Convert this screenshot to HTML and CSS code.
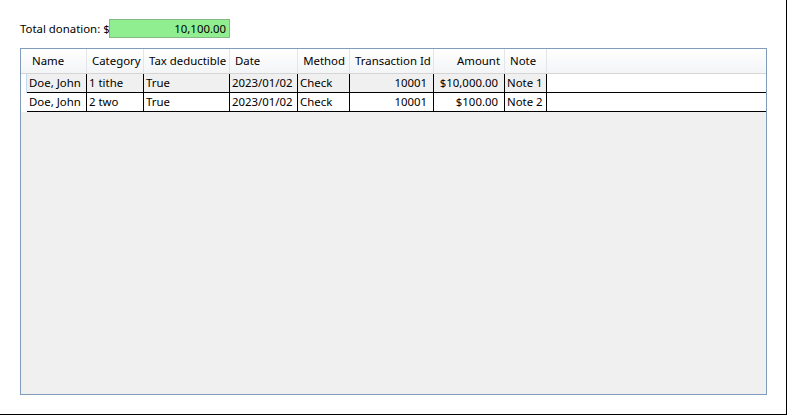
FILE: index.html
```html
<!DOCTYPE html>
<html>
<head>
<meta charset="utf-8">
<link rel="stylesheet" href="styles.css">
</head>
<body>
<div class="window">
  <div class="total">
    <span class="total-label">Total donation: $</span>
    <div class="total-box">10,100.00</div>
  </div>
  <div class="datagrid">
    <div class="dg-row dg-head">
      <div class="hc rh"></div>
      <div class="hc">Name</div>
      <div class="hc">Category</div>
      <div class="hc">Tax deductible</div>
      <div class="hc">Date</div>
      <div class="hc right">Method</div>
      <div class="hc">Transaction Id</div>
      <div class="hc right">Amount</div>
      <div class="hc">Note</div>
      <div class="hc filler"></div>
    </div>
    <div class="dg-row selected">
      <div class="rh-cell active"></div>
      <div class="c">Doe, John</div>
      <div class="c">1 tithe</div>
      <div class="c">True</div>
      <div class="c">2023/01/02</div>
      <div class="c">Check</div>
      <div class="c right">10001</div>
      <div class="c right">$10,000.00</div>
      <div class="c">Note 1</div>
      <div class="c filler"></div>
    </div>
    <div class="dg-row">
      <div class="rh-cell"></div>
      <div class="c">Doe, John</div>
      <div class="c">2 two</div>
      <div class="c">True</div>
      <div class="c">2023/01/02</div>
      <div class="c">Check</div>
      <div class="c right">10001</div>
      <div class="c right">$100.00</div>
      <div class="c">Note 2</div>
      <div class="c filler"></div>
    </div>
  </div>
</div>
</body>
</html>
```

FILE: styles.css
```css
html, body {
  margin: 0;
  padding: 0;
  background: #ffffff;
}
body {
  font-family: "Noto Sans", "Open Sans", sans-serif;
  font-size: 11.4px;
  color: #000;
}
.window {
  width: 787px;
  height: 415px;
  box-sizing: border-box;
  border-right: 1px solid #000;
  border-bottom: 1px solid #000;
  padding: 19px 0 0 20px;
}
.total {
  display: flex;
  align-items: center;
  height: 19px;
}
.total-label {
  width: 89px;
  white-space: nowrap;
}
.total-box {
  box-sizing: border-box;
  width: 121px;
  height: 19px;
  background: #90ee90;
  border: 1px solid #86b886;
  text-align: right;
  padding-right: 3px;
  line-height: 17px;
}
.datagrid {
  margin-top: 10px;
  box-sizing: border-box;
  width: 747px;
  height: 347px;
  border: 1px solid #7f9cbb;
  background: #f0f0f0;
}
.dg-row {
  display: grid;
  grid-template-columns: 6px 60px 57px 86px 68px 52px 84px 71px 42px 1fr;
  height: 19px;
}
.dg-head {
  height: 25px;
  background: linear-gradient(#ffffff, #f3f4f6);
}
.hc {
  box-sizing: border-box;
  border-right: 1px solid #e3e5e8;
  border-bottom: 1px solid #d5d5d5;
  padding: 0 4px 0 5px;
  line-height: 24px;
  white-space: nowrap;
}
.hc.rh {
  border-right: none;
  padding: 0;
}
.hc.right {
  text-align: right;
}
.hc.filler {
  border-right: none;
}
.rh-cell {
  background: #ffffff;
}
.rh-cell.active {
  border-right: 1px solid #c4daf0;
}
.c {
  box-sizing: border-box;
  background: #ffffff;
  border-right: 1px solid #000;
  border-bottom: 1px solid #000;
  padding: 0 2px;
  line-height: 17px;
  white-space: nowrap;
  overflow: hidden;
}
.selected .c {
  background: #f0f0f0;
}
.c.right {
  text-align: right;
  padding-right: 6px;
}
.c.filler,
.selected .c.filler {
  border-right: none;
  background: #ffffff;
}
```
